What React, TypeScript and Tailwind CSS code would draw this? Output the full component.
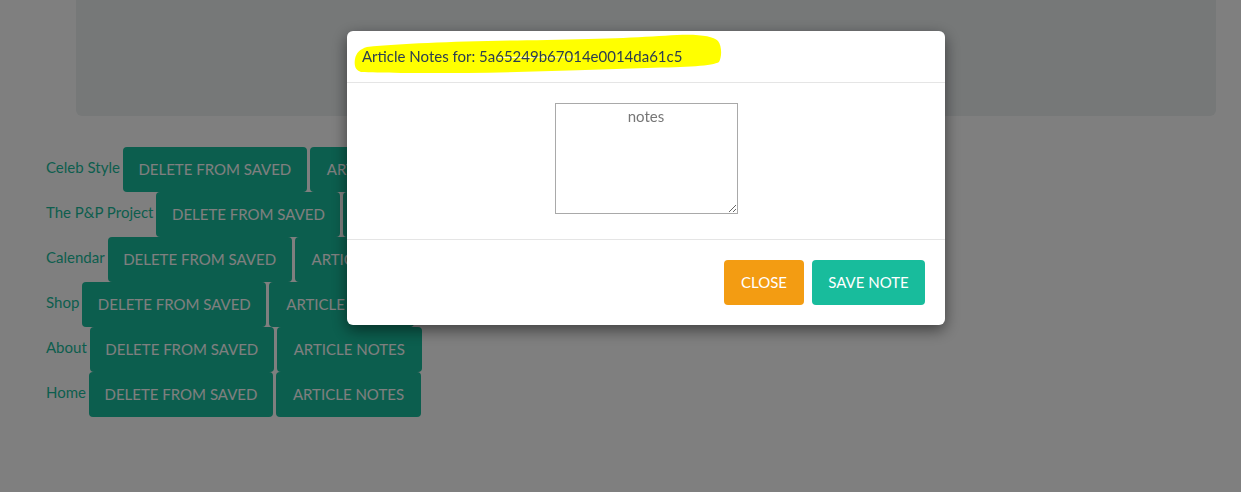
const rows = [
  { label: "Celeb Style" },
  { label: "The P&P Project" },
  { label: "Calendar" },
  { label: "Shop" },
  { label: "About" },
  { label: "Home" },
];

const Highlight = () => (
  <svg
    className="absolute left-0 top-0"
    width="380"
    height="48"
    viewBox="0 0 380 48"
  >
    <path
      d="M8 28 C9 22 13 18 20 16 C60 12 120 10 200 9 C260 8 300 6 330 4 C352 3 366 5 371 10 C375 15 375 26 372 31 C366 35 340 36 300 37 C240 39 180 41 120 42 C70 42 30 42 14 41 C8 39 7 34 8 28 Z"
      fill="#ffff00"
    />
    <path d="M150 26.5 L228 26" stroke="#ffffff" strokeWidth="1.2" opacity="0.8" />
  </svg>
);

const NotesModal = () => (
  <div className="fixed inset-0 bg-black/50">
    <div className="ml-[347px] mt-[31px] w-[598px] rounded-[6px] bg-white shadow-[0_5px_15px_rgba(0,0,0,0.5)]">
      <div className="relative border-b border-[#e5e5e5] p-[15px]">
        <Highlight />
        <h4 className="relative text-[15px] leading-[21px] text-[#2c3e50]">
          Article Notes for: 5a65249b67014e0014da61c5
        </h4>
      </div>
      <div className="flex justify-center px-5 pt-5 pb-[25px]">
        <textarea
          placeholder="notes"
          className="block h-[111px] w-[183px] border border-[#a9a9a9] p-[2px] text-center text-[15px] leading-[21px] placeholder:text-[#777777]"
        />
      </div>
      <div className="flex justify-end gap-2 border-t border-[#e5e5e5] p-5">
        <button className="h-[45px] w-[80px] rounded-[4px] bg-[#f39c12] text-[15px] uppercase text-white">
          Close
        </button>
        <button className="h-[45px] w-[113px] rounded-[4px] bg-[#18bc9c] text-[15px] uppercase text-white">
          Save Note
        </button>
      </div>
    </div>
  </div>
);

export default function App() {
  return (
    <div className="relative min-h-[492px] bg-white font-['Lato',sans-serif]">
      <div className="ml-[76px] h-[116px] w-[1140px] rounded-b-[6px] bg-[#ecf0f1]" />
      <div className="mt-[31px] flex flex-col pl-[46px]">
        {rows.map((row) => (
          <div key={row.label} className="flex h-[45px] items-center gap-[3px]">
            <a className="-mt-[4px] text-[15px] text-[#18bc9c]">{row.label}</a>
            <button className="h-[45px] w-[184px] rounded-[4px] bg-[#18bc9c] text-[15px] uppercase text-white">
              Delete From Saved
            </button>
            <button className="h-[45px] w-[145px] rounded-[4px] bg-[#18bc9c] text-[15px] uppercase text-white">
              Article Notes
            </button>
          </div>
        ))}
      </div>
      <NotesModal />
    </div>
  );
}
